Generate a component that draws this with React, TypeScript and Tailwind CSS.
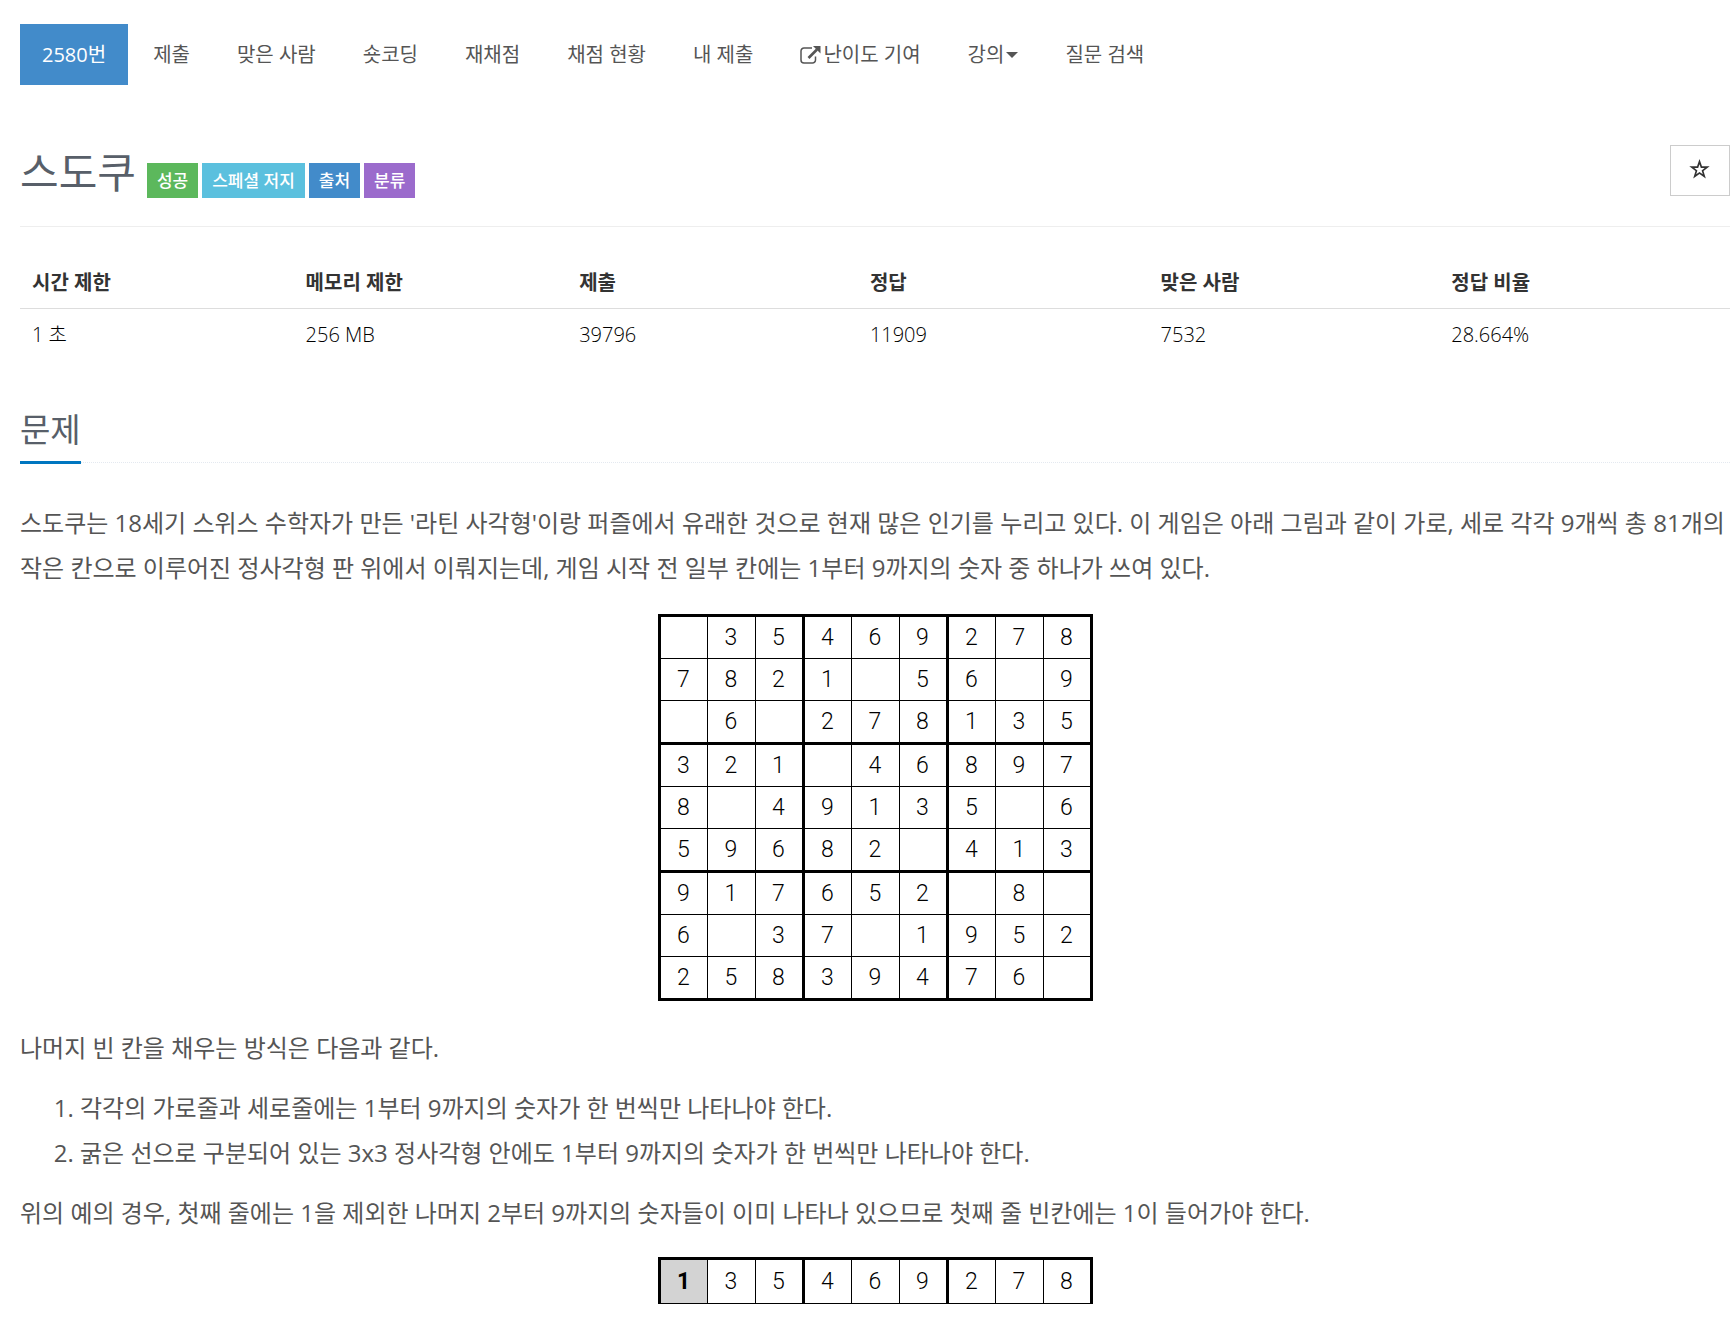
import { type ReactNode } from "react";

type NavItem = {
  label: string;
  active?: boolean;
  external?: boolean;
  dropdown?: boolean;
};

const navItems: NavItem[] = [
  { label: "2580번", active: true },
  { label: "제출" },
  { label: "맞은 사람" },
  { label: "숏코딩" },
  { label: "재채점" },
  { label: "채점 현황" },
  { label: "내 제출" },
  { label: "난이도 기여", external: true },
  { label: "강의", dropdown: true },
  { label: "질문 검색" },
];

const labels = [
  { text: "성공", color: "bg-[#5cb85c]" },
  { text: "스페셜 저지", color: "bg-[#5bc0de]" },
  { text: "출처", color: "bg-[#428bca]" },
  { text: "분류", color: "bg-[#9b6bcc]" },
];

const info = [
  { head: "시간 제한", value: "1 초", width: "w-[16%]" },
  { head: "메모리 제한", value: "256 MB", width: "w-[16%]" },
  { head: "제출", value: "39796", width: "w-[17%]" },
  { head: "정답", value: "11909", width: "w-[17%]" },
  { head: "맞은 사람", value: "7532", width: "w-[17%]" },
  { head: "정답 비율", value: "28.664%", width: "w-[17%]" },
];

const board = [
  " 35469278",
  "7821 56 9",
  " 6 278135",
  "321 46897",
  "8 49135 6",
  "59682 413",
  "917652 8 ",
  "6 37 1952",
  "25839476 ",
];

function ExternalLinkIcon() {
  return (
    <svg viewBox="0 0 21 18" className="h-[18px] w-[21px]" fill="none" stroke="currentColor" aria-hidden="true">
      <path d="M12 2H4a3 3 0 0 0-3 3v9a3 3 0 0 0 3 3h8.500a3 3 0 0 0 3-3v-3.500" strokeWidth="1.500" />
      <path d="M8.500 12L17 3.500" strokeWidth="2.600" />
      <path d="M13 0h7.500v7.500z" fill="currentColor" stroke="none" />
    </svg>
  );
}

function Nav() {
  return (
    <nav className="pt-6">
      <ul className="flex flex-wrap gap-[3px]">
        {navItems.map((item) => (
          <li key={item.label}>
            <a
              href="#"
              className={`flex h-[61px] items-center px-[22px] text-[20px] ${
                item.active ? "bg-[#428bca] text-white" : "text-[#555]"
              }`}
            >
              {item.external && (
                <span className="mr-[2px]">
                  <ExternalLinkIcon />
                </span>
              )}
              {item.label}
              {item.dropdown && (
                <svg viewBox="0 0 12 6" className="ml-[2px] h-[6px] w-3" fill="currentColor" aria-hidden="true">
                  <path d="M0 0h12L6 6z" />
                </svg>
              )}
            </a>
          </li>
        ))}
      </ul>
    </nav>
  );
}

function Title() {
  return (
    <header className="mt-[60px] flex items-start justify-between border-b border-[#eee] pb-[28px]">
      <div className="flex items-end">
        <h1 className="text-[42px] leading-[53px] text-[#585f69]">스도쿠</h1>
        <div className="ml-[11px] flex gap-1">
          {labels.map((l) => (
            <span
              key={l.text}
              className={`flex h-[35px] items-center px-[10px] text-[17px] font-medium text-white ${l.color}`}
            >
              {l.text}
            </span>
          ))}
        </div>
      </div>
      <button
        type="button"
        aria-label="즐겨찾기"
        className="flex h-[51px] w-[60px] items-center justify-center border border-[#ccc] pr-[2px] pb-1 text-[#333]"
      >
        <svg viewBox="0 0 21 20" className="h-5 w-[21px]" fill="currentColor" fillRule="evenodd" aria-hidden="true">
          <path d="M10.500 0l2.500 7.300h7.700l-6.200 4.700 2.300 7.500-6.300-4.600-6.300 4.600L6.500 12 .3 7.300H8zM10.500 5.200L9.200 9H5.300l3.100 2.400-1.200 3.900 3.300-2.400 3.300 2.400-1.200-3.900L15.700 9h-3.900z" />
        </svg>
      </button>
    </header>
  );
}

function InfoTable() {
  return (
    <table className="mt-[26px] w-full table-fixed text-left text-[20px] text-[#333]">
      <thead>
        <tr className="border-b border-[#ddd]">
          {info.map((c) => (
            <th key={c.head} className={`h-[55px] px-3 pt-[6px] font-bold ${c.width}`}>
              {c.head}
            </th>
          ))}
        </tr>
      </thead>
      <tbody>
        <tr>
          {info.map((c) => (
            <td key={c.head} className="h-[53px] px-3 font-light text-black">
              {c.value}
            </td>
          ))}
        </tr>
      </tbody>
    </table>
  );
}

function Board({ rows, filled = false }: { rows: string[]; filled?: boolean }) {
  return (
    <table
      className={`mx-auto border-collapse border-[3px] border-black font-['Roboto'] text-[23px] font-light text-black ${
        rows.length > 1 ? "h-[387px]" : "h-[47px] border-b"
      }`}
    >
      <tbody>
        {rows.map((row, y) => (
          <tr key={y}>
            {row.split("").map((n, x) => (
              <td
                key={x}
                className={`w-12 border border-black text-center leading-none ${
                  x % 3 === 2 ? "border-r-[3px]" : ""
                } ${y % 3 === 2 ? "border-b-[3px]" : ""} ${
                  filled && x === 0 ? "bg-[#d3d3d3] font-bold" : ""
                }`}
              >
                {n}
              </td>
            ))}
          </tr>
        ))}
      </tbody>
    </table>
  );
}

function Paragraph({ children }: { children: ReactNode }) {
  return <p className="leading-[45px]">{children}</p>;
}

export default function App() {
  return (
    <div className="min-h-screen bg-white pr-[5px] pl-5 font-['Open_Sans','Noto_Sans_CJK_KR',sans-serif]">
      <Nav />
      <Title />
      <InfoTable />

      <section className="mt-[42px]">
        <div className="border-b border-dotted border-[#e4e9f0]">
          <h2 className="-mb-[2px] inline-block border-b-[3px] border-[#0076c0] pt-[2px] pb-[6px] text-[33px] leading-[50px] text-[#585f69]">
            문제
          </h2>
        </div>

        <div className="mt-[37px] text-[24px] text-[#555]">
          <Paragraph>
            스도쿠는 18세기 스위스 수학자가 만든 '라틴 사각형'이랑 퍼즐에서 유래한 것으로 현재 많은 인기를 누리고 있다. 이 게임은 아래 그림과 같이 가로, 세로 각각 9개씩 총 81개의 작은 칸으로 이루어진 정사각형 판 위에서 이뤄지는데, 게임 시작 전 일부 칸에는 1부터 9까지의 숫자 중 하나가 쓰여 있다.
          </Paragraph>
          <div className="my-6">
            <Board rows={board} />
          </div>
          <Paragraph>나머지 빈 칸을 채우는 방식은 다음과 같다.</Paragraph>
          <ol className="my-[15px] list-decimal pl-[60px] leading-[45px]">
            <li>각각의 가로줄과 세로줄에는 1부터 9까지의 숫자가 한 번씩만 나타나야 한다.</li>
            <li>굵은 선으로 구분되어 있는 3x3 정사각형 안에도 1부터 9까지의 숫자가 한 번씩만 나타나야 한다.</li>
          </ol>
          <Paragraph>
            위의 예의 경우, 첫째 줄에는 1을 제외한 나머지 2부터 9까지의 숫자들이 이미 나타나 있으므로 첫째 줄 빈칸에는 1이 들어가야 한다.
          </Paragraph>
          <div className="my-[22px]">
            <Board rows={["135469278"]} filled />
          </div>
        </div>
      </section>
    </div>
  );
}
